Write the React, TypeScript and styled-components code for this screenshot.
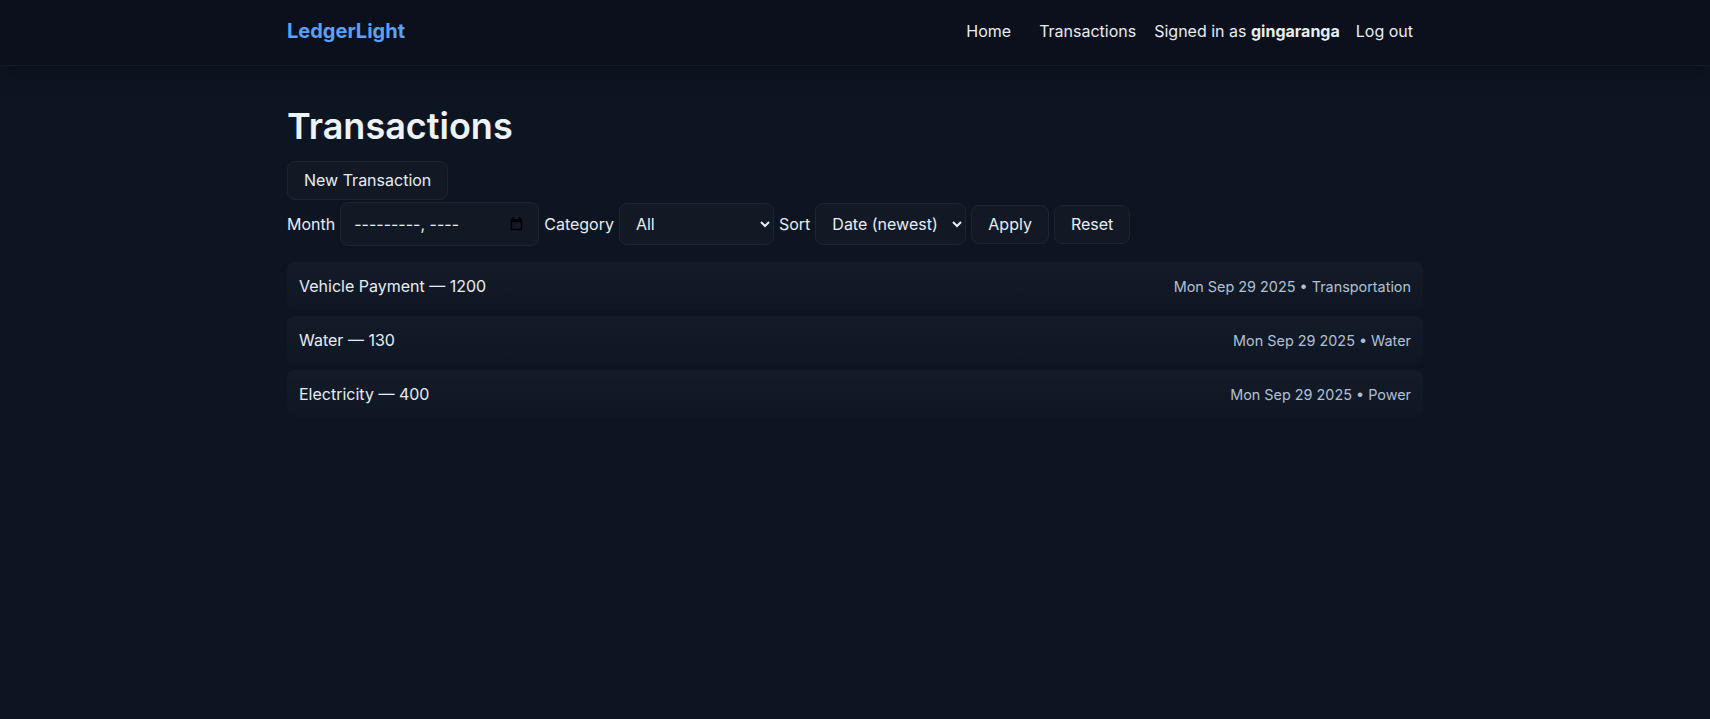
import React from "react";
import styled, { createGlobalStyle } from "styled-components";

const GlobalStyle = createGlobalStyle`
  html, body {
    margin: 0;
    padding: 0;
    background: #0e1522;
    color: #e6edf5;
    font-family: Inter, "Noto Sans", Arial, sans-serif;
    font-size: 16px;
  }
  * { box-sizing: border-box; }
`;

const Header = styled.header`
  background: #0b101c;
  border-bottom: 1px solid #141b28;
  box-shadow: 0 6px 24px rgba(0, 0, 0, 0.25);
`;

const Container = styled.div`
  max-width: 1200px;
  margin: 0 auto;
  padding: 0 32px;
`;

const HeaderInner = styled(Container)`
  height: 65px;
  padding-bottom: 4px;
  display: flex;
  align-items: center;
  justify-content: space-between;
`;

const Brand = styled.a`
  color: #5aa1f8;
  font-weight: 700;
  font-size: 20px;
  text-decoration: none;
`;

const Nav = styled.nav`
  display: flex;
  align-items: center;
  gap: 8px;
  font-size: 16px;
`;

const NavLink = styled.a`
  color: #e6edf5;
  text-decoration: none;
  padding: 6px 10px;
`;

const SignedIn = styled.span`
  color: #e6edf5;
  b { font-weight: 700; }
`;

const LogoutButton = styled.button`
  background: none;
  border: none;
  color: #e6edf5;
  font: inherit;
  padding: 6px 10px 6px 8px;
  cursor: pointer;
`;

const Main = styled(Container)`
  padding-top: 38px;
`;

const Title = styled.h1`
  margin: 0 0 13px;
  font-size: 36px;
  line-height: 44px;
  font-weight: 600;
  color: #eef3f9;
`;

const Button = styled.button`
  background: #121925;
  border: 1px solid #1d2533;
  border-radius: 8px;
  color: #e6edf5;
  font-family: inherit;
  font-size: 16px;
  line-height: 21px;
  padding: 8px 16px;
  cursor: pointer;
`;

const Filters = styled.form`
  margin-top: 2px;
  display: flex;
  align-items: center;
  gap: 5px;
`;

const Label = styled.label`
  font-size: 16px;
  color: #e6edf5;
`;

const MonthBox = styled.div`
  position: relative;
  width: 199px;
  height: 44px;
`;

const Field = styled.input`
  background: #121925;
  border: 1px solid #1d2533;
  border-radius: 8px;
  color: #e6edf5;
  font-family: inherit;
  font-size: 16px;
  padding: 10px 13px;
  width: 100%;
  height: 100%;
  &::placeholder {
    color: #e6edf5;
    opacity: 1;
  }
`;

const CalendarIcon = styled.svg`
  position: absolute;
  right: 16px;
  top: 15px;
  width: 13px;
  height: 14px;
  pointer-events: none;
`;

const Select = styled.select<{ $w: number }>`
  background: #121925;
  border: 1px solid #1d2533;
  border-radius: 8px;
  color: #e6edf5;
  font-family: inherit;
  font-size: 16px;
  padding: 9px 10px 9px 12px;
  height: 42px;
  width: ${(p) => p.$w}px;
`;

const List = styled.ul`
  list-style: none;
  margin: 16px 0 0;
  padding: 0;
  display: flex;
  flex-direction: column;
  gap: 6px;
`;

const Row = styled.li`
  display: flex;
  align-items: center;
  justify-content: space-between;
  padding: 12px;
  height: 48px;
  border-radius: 8px;
  background: linear-gradient(180deg, rgba(255, 255, 255, 0.028), rgba(255, 255, 255, 0.008));
`;

const RowTitle = styled.span`
  font-size: 16px;
  color: #e6edf5;
`;

const RowMeta = styled.span`
  font-size: 14.4px;
  color: #b0c0d4;
`;

const items = [
  { title: "Vehicle Payment", amount: 1200, date: "Mon Sep 29 2025", cat: "Transportation" },
  { title: "Water", amount: 130, date: "Mon Sep 29 2025", cat: "Water" },
  { title: "Electricity", amount: 400, date: "Mon Sep 29 2025", cat: "Power" },
];

export default function App() {
  return (
    <>
      <GlobalStyle />
      <Header>
        <HeaderInner>
          <Brand href="#">LedgerLight</Brand>
          <Nav>
            <NavLink href="#">Home</NavLink>
            <NavLink href="#">Transactions</NavLink>
            <SignedIn>
              Signed in as <b>gingaranga</b>
            </SignedIn>
            <LogoutButton type="button">Log out</LogoutButton>
          </Nav>
        </HeaderInner>
      </Header>
      <Main>
        <Title>Transactions</Title>
        <Button type="button">New Transaction</Button>
        <Filters onSubmit={(e) => e.preventDefault()}>
          <Label htmlFor="month">Month</Label>
          <MonthBox>
            <Field id="month" type="text" placeholder="---------, ----" />
            <CalendarIcon viewBox="0 0 13 14" aria-hidden="true">
              <rect x="2.5" y="0" width="1.6" height="3" fill="#000" />
              <rect x="8.9" y="0" width="1.6" height="3" fill="#000" />
              <path
                d="M0.8 2h11.4v11.2H0.8z M2.2 5.2v6.6h8.6V5.2z"
                fill="#000"
                fillRule="evenodd"
              />
            </CalendarIcon>
          </MonthBox>
          <Label htmlFor="cat">Category</Label>
          <Select id="cat" $w={155} defaultValue="All">
            <option>All</option>
            <option>Transportation</option>
            <option>Water</option>
            <option>Power</option>
          </Select>
          <Label htmlFor="sort">Sort</Label>
          <Select id="sort" $w={151} defaultValue="Date (newest)">
            <option>Date (newest)</option>
            <option>Date (oldest)</option>
            <option>Amount (high)</option>
            <option>Amount (low)</option>
          </Select>
          <Button type="submit">Apply</Button>
          <Button type="button">Reset</Button>
        </Filters>
        <List>
          {items.map((it) => (
            <Row key={it.title}>
              <RowTitle>
                {it.title} — {it.amount}
              </RowTitle>
              <RowMeta>
                {it.date} • {it.cat}
              </RowMeta>
            </Row>
          ))}
        </List>
      </Main>
    </>
  );
}
